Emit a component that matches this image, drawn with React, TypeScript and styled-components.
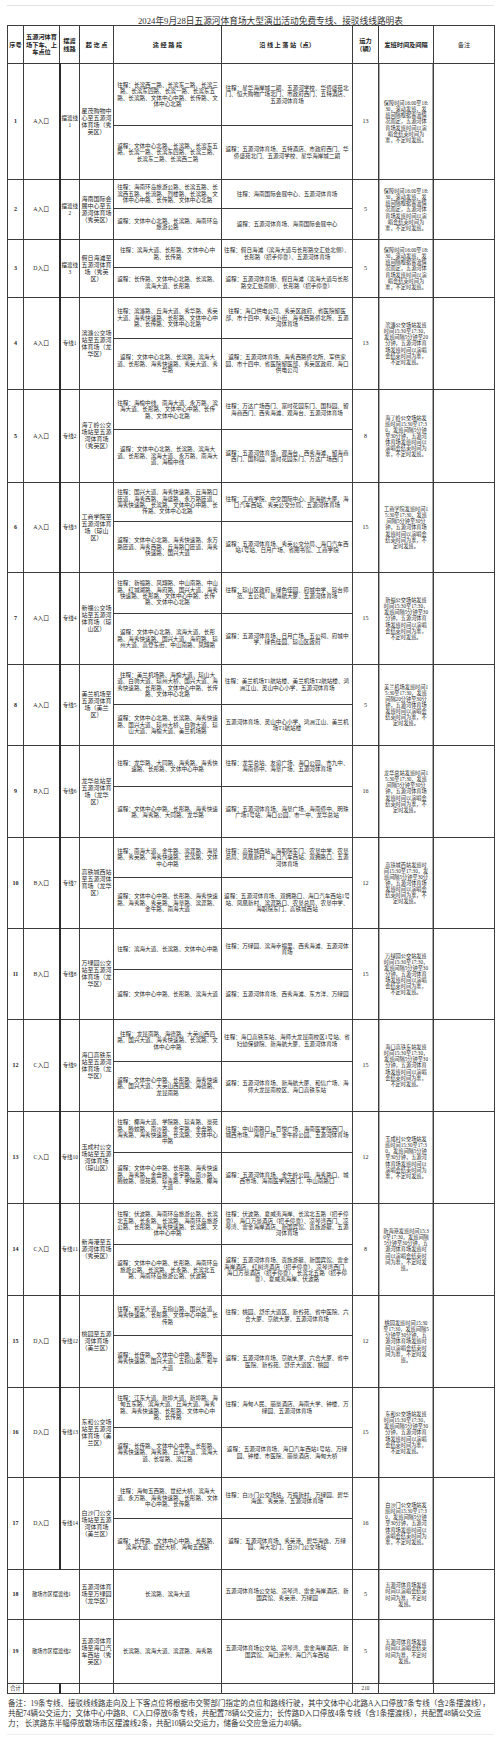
import React from "react";
import styled, { createGlobalStyle } from "styled-components";

const Global = createGlobalStyle`
  html, body { margin: 0; padding: 0; background: #ffffff; }
  body {
    width: 500px;
    font-family: "Liberation Serif", "Noto Sans CJK SC", serif;
    color: #262626;
  }
`;

const Page = styled.div`
  width: 500px;
  box-sizing: border-box;
  padding: 0 6px 6px 7px;
`;

const TitleBar = styled.div`
  height: 25px;
  box-sizing: border-box;
  border-top: 1px solid #e2e2e2;
  margin-top: 5px;
  margin-bottom: -5px;
  display: flex;
  align-items: flex-end;
  justify-content: center;
  padding: 0 0 4px 40px;
  font-size: 8.7px;
  line-height: 10px;
  color: #333;
  white-space: nowrap;
`;

const Table = styled.table`
  width: 487px;
  border-collapse: collapse;
  table-layout: fixed;
  font-size: 5.6px;
  line-height: 6.4px;
`;

const Row = styled.tr<{ $h: number }>`
  height: ${(p) => p.$h}px;
`;

const Cell = styled.td<{
  $bold?: boolean;
  $size?: number;
  $lh?: number;
  $thick?: boolean;
  $sched?: boolean;
}>`
  border: 1px solid #3c3c3c;
  ${(p) => (p.$thick ? "border-left: 2px solid #2a2a2a;" : "")}
  padding: ${(p) => (p.$sched ? "0 4px" : "0 1px")};
  text-align: center;
  vertical-align: middle;
  overflow: hidden;
  word-break: break-all;
  font-weight: ${(p) => (p.$bold ? 700 : 400)};
  font-size: ${(p) => (p.$size ? `${p.$size}px` : "inherit")};
  line-height: ${(p) => (p.$lh ? `${p.$lh}px` : "inherit")};
  ${(p) =>
    p.$sched ? "box-shadow: inset 1px 0 #a8a8a8, inset -1px 0 #a8a8a8;" : ""}
`;

const Head = styled.th<{ $light?: boolean }>`
  border: 1px solid #3c3c3c;
  padding: 0 1px;
  font-size: 6.2px;
  line-height: 7.4px;
  font-weight: ${(p) => (p.$light ? 400 : 700)};
  text-align: center;
  vertical-align: middle;
  word-break: break-all;
  color: #222;
`;

const Note = styled.div`
  font-size: 7.5px;
  line-height: 10px;
  padding: 5px 0 5px 1px;
  color: #333;
  word-break: break-all;
  border-bottom: 1px solid #eeeeee;
`;

type Route = {
  no: number;
  gate: string;
  line: string;
  od: string;
  go: string;
  back: string;
  goStops: string;
  backStops: string;
  cap: number;
  sched: string;
  h: [number, number];
};

type Shuttle = {
  no: number;
  name: string;
  od: string;
  route: string;
  stops: string;
  cap: number;
  sched: string;
  h: number;
};

const S1 =
  "保障时间16:00至18:30，滚动发班，发班间隔根据客流情况而定，五源河体育场发班时间以演唱会结束时间为准，不定时发班。";
const sched = (o: string, a = "5分钟至30分钟") =>
  `${o}发班时间15:30至17:30，发班间隔${a}，五源河体育场发班时间以演唱会结束时间为准，不定时发班。`;

const routes: Route[] = [
  {
    no: 1, gate: "A入口", line: "摆渡线1", od: "星茂购物中心至五源河体育场（秀英区）",
    go: "往程：长滨西二路、长滨东二路、长滨三路、长滨东四路、长滨一路、长滨东五路、长滨路、文体中心中路、长传路、文体中心北路",
    back: "返程：文体中心北路、长滨路、长滨东五路、长滨一路、长滨东四路、长滨三路、长滨东二路、长滨西二路",
    goStops: "往程：星华海岸城二期、五源河学校、华侨盛苑北门、恒大购物广场北门、市政府西门、五特酒店、五源河体育场",
    backStops: "返程：五源河体育场、五特酒店、市政府西门、华侨盛苑北门、五源河学校、星华海岸城二期",
    cap: 13, sched: S1, h: [62, 54],
  },
  {
    no: 2, gate: "A入口", line: "摆渡线2", od: "海南国际会展中心至五源河体育场（秀英区）",
    go: "往程：海南环岛旅游公路、长滨五路、长滨西五路、长流路、烈楼路、长滨路、文体中心中路、长传路、文体中心北路",
    back: "返程：文体中心北路、长滨路、海南环岛旅游公路",
    goStops: "往程：海南国际会展中心、五源河体育场",
    backStops: "返程：五源河体育场、海南国际会展中心",
    cap: 5, sched: S1, h: [29, 31],
  },
  {
    no: 3, gate: "D入口", line: "摆渡线3", od: "假日海滩至五源河体育场（秀英区）",
    go: "往程：滨海大道、长彤路、文体中心中路、长传路",
    back: "返程：长传路、文体中心北路、长滨路、滨海大道、长彤路",
    goStops: "往程：假日海滩（滨海大道与长彤路交汇处北侧）、长彤路（招手停靠）、五源河体育场",
    backStops: "返程：五源河体育场、假日海滩（滨海大道与长彤路交汇处南侧）、长彤路（招手停靠）",
    cap: 5, sched: S1, h: [28, 30],
  },
  {
    no: 4, gate: "A入口", line: "专线1", od: "滨濂公交场站至五源河体育场（龙华区）",
    go: "往程：滨濂路、丘海大道、秀华路、秀英大道、海秀快速路、长彤路、文体中心中路、长传路、文体中心北路",
    back: "返程：文体中心北路、长滨路、滨海大道、长彤路、海秀快速路、秀英大道、秀华路",
    goStops: "往程：海口供电公司、秀英区政府、省医院留医部、市十四中、秀英小街、海秀西路侨北所、五源河体育场",
    backStops: "返程：五源河体育场、海秀西路侨北所、军供家园、市十四中、省医院留医部、秀英区政府、海口供电公司",
    cap: 13, sched: sched("滨濂公交场站", "5分钟至20分钟"), h: [41, 51],
  },
  {
    no: 5, gate: "A入口", line: "专线2", od: "海了岭公交场站至五源河体育场（秀英区）",
    go: "往程：海榆中线、南海大道、永万路、滨海大道、长彤路、文体中心中路、长传路、文体中心北路",
    back: "返程：文体中心北路、长滨路、滨海大道、长彤路、滨海大道、永万路、南海大道、海榆中线",
    goStops: "往程：万达广场西门、富时花园东门、国科园、留海商西门、西秀海滩、观海台、五源河体育场",
    backStops: "返程：五源河体育场、观海台、西秀海滩、留海商西门、国科园、富时花园东门、万达广场西门",
    cap: 8, sched: sched("海了岭公交场站"), h: [40, 53],
  },
  {
    no: 6, gate: "A入口", line: "专线3", od: "工商学院至五源河体育场（琼山区）",
    go: "往程：国兴大道、海秀快速路、丘海路口匝道、海秀西路、海盛路、永万路匝道、海秀快速路、长滨路、文体中心中路、长传路、文体中心北路",
    back: "返程：文体中心北路、海秀快速路、永万路匝道、海秀西路、丘海路口匝道、海秀快速路、国兴大道",
    goStops: "往程：工商学院、中交国际中心、新海航大厦、海口汽车西站、秀英公交分局、五源河体育场",
    backStops: "返程：五源河体育场、秀英公交分局、海口汽车西站1号站、日月广场、省图书馆、工商学院",
    cap: 15, sched: sched("工商学院"), h: [39, 51],
  },
  {
    no: 7, gate: "A入口", line: "专线4", od: "新福公交场站至五源河体育场（琼山区）",
    go: "往程：新福路、凤翔路、中山南路、中山路、红城湖路、海府路、国兴大道、海秀快速路、长彤路、文体中心中路、长传路、文体中心北路",
    back: "返程：文体中心北路、滨海大道、长彤路、海秀快速路、国兴大道、海府路、琼州大道、高登东街、中山南路、凤翔路",
    goStops: "往程：琼山区政府、绿色佳园、府城中学、琼台师范、五公祠、新海航大厦、五源河体育场",
    backStops: "返程：五源河体育场、日月广场、五公祠、府城中学、绿色佳园、琼山区政府",
    cap: 15, sched: sched("新福公交场站"), h: [41, 51],
  },
  {
    no: 8, gate: "A入口", line: "专线5", od: "美兰机场至五源河体育场（美兰区）",
    go: "往程：美兰机场路、海榆大道、琼山大道、白驹大道、琼州大桥、国兴大道、海秀快速路、长彤路、文体中心中路、长传路、文体中心北路",
    back: "返程：文体中心北路、长滨路、海秀快速路、国兴大道、琼州大桥、白驹大道、琼山大道、海榆大道、美兰机场路",
    goStops: "往程：美兰机场T1航站楼、美兰机场T2航站楼、鸿洲江山、灵山中心小学、五源河体育场",
    backStops: "五源河体育场、灵山中心小学、鸿洲江山、美兰机场T1航站楼",
    cap: 5, sched: sched("美兰机场", "20分钟至30分钟"), h: [40, 41],
  },
  {
    no: 9, gate: "B入口", line: "专线6", od: "龙华总站至五源河体育场（龙华区）",
    go: "往程：龙华路、大同路、海秀路、海秀快速路、长彤路、文体中心中路",
    back: "返程：文体中心中路、长彤路、海秀快速路、海秀路、大同路、龙华路",
    goStops: "往程：龙华总站、友谊广场、海口公园、市九中、海南侨中、海垦广场、五源河体育场",
    backStops: "返程：五源河体育场、海垦广场、海南侨中、明珠广场1号站、海口公园、市一中、龙华总站",
    cap: 16, sched: sched("龙华总站"), h: [41, 51],
  },
  {
    no: 10, gate: "B入口", line: "专线7", od: "高铁城西站至五源河体育场（龙华区）",
    go: "往程：南海大道、金牛路、滨涯路、海垦路、秀英路、海秀快速路、长滨路、文体中心中路",
    back: "返程：文体中心中路、长彤路、海秀快速路、海秀路、秀英路、海垦路、滨涯路、金牛路、南海大道",
    goStops: "往程：高铁城西站、海职院东门、农垦中学、农垦总局、凤凰新村、海口汽车西站、双拥路口、五源河体育场",
    backStops: "返程：五源河体育场、双拥路口、海口汽车西站1号站、凤凰新村、滨涯路口、农垦总局、农垦中学、海职院东门、高铁城西站",
    cap: 12, sched: sched("高铁城西站"), h: [40, 51],
  },
  {
    no: 11, gate: "B入口", line: "专线8", od: "万绿园公交站至五源河体育场（龙华区）",
    go: "往程：滨海大道、长滨路、文体中心中路",
    back: "返程：文体中心中路、长彤路、滨海大道",
    goStops: "往程：万绿园、滨海幸福里、西秀海滩、五源河体育场",
    backStops: "返程：五源河体育场、西秀海滩、东方洋、万绿园",
    cap: 15, sched: sched("万绿园公交站"), h: [41, 50],
  },
  {
    no: 12, gate: "C入口", line: "专线9", od: "海口高铁东站至五源河体育场（龙华区）",
    go: "往程：龙昆南路、海德路、大英山西四路、国兴大道、海秀快速路、长滨路、文体中心中路",
    back: "返程：文体中心中路、长彤路、海秀快速路、国兴大道、大英山西四路、海德路、龙昆南路",
    goStops: "往程：海口高铁东站、海师大龙昆南校区1号站、省妇幼保健院、新海航大厦、五源河体育场",
    backStops: "返程：五源河体育场、新海航大厦、和信广场、海师大龙昆南校区、海口高铁东站",
    cap: 15, sched: sched("海口高铁东站"), h: [42, 50],
  },
  {
    no: 13, gate: "C入口", line: "专线10", od: "玉成村公交场站至五源河体育场（琼山区）",
    go: "往程：椰海大道、学院路、琼青路、豪苑路、腾蛟路、南沙路、金宇路、金盘路、海秀路、海秀快速路、长滨路、文体中心中路",
    back: "返程：文体中心中路、长彤路、海秀快速路、海秀路、金盘路、金宇路、南沙路、腾蛟路、豪苑路、琼青路、学院路、椰海大道",
    goStops: "往程：中山南路口、百悦广场、海南医学院西门、城西市场、海垦广场、金牛岭公园、五源河体育场",
    backStops: "返程：五源河体育场、金牛岭公园、海秀路口、城西市场、海南医学院西门、中山南路口",
    cap: 12, sched: sched("玉成村公交场站"), h: [41, 51],
  },
  {
    no: 14, gate: "C入口", line: "专线11", od: "新海港至五源河体育场（秀英区）",
    go: "往程：伏波路、海南环岛旅游公路、长滨北五路、长永路、长滨路、海南环岛旅游公路、长彤路、海秀快速路、长滨路、文体中心中路",
    back: "返程：文体中心中路、长彤路、海南环岛旅游公路、长滨路、长永路、长滨北五路、海南环岛旅游公路、伏波路",
    goStops: "往程：伏波路、夏威夷海岸、长滨北五路（招手停靠）、海口万豪酒店（招手停靠）、凉琴湾西门、凉琴湾、雷金海岸酒店、新国宾馆、贵族游艇、五源河体育场",
    backStops: "返程：五源河体育场、贵族游艇、新国宾馆、雷金海岸酒店、红树湾酒店（招手停靠）、凉琴湾西门、海口万豪酒店（招手停靠）、长滨北五路（招手停靠）、夏威夷海岸、伏波路",
    cap: 8, sched: sched("新海港"), h: [41, 51],
  },
  {
    no: 15, gate: "D入口", line: "专线12", od: "桃园至五源河体育场（美兰区）",
    go: "往程：和平大道、五指山路、国兴大道、海秀快速路、长彤路、文体中心中路、长传路",
    back: "返程：长传路、文体中心中路、长彤路、海秀快速路、国兴大道、五指山路、和平大道",
    goStops: "往程：桃园、舒乐大道区、新谷苑、省中医院、六合大厦、京航大厦、五源河体育场",
    backStops: "返程：五源河体育场、京航大厦、六合大厦、省中医院、新谷苑、舒乐大道区、桃园",
    cap: 12, sched: sched("桃园"), h: [40, 52],
  },
  {
    no: 16, gate: "D入口", line: "专线13", od: "东和公交场站至五源河体育场（美兰区）",
    go: "往程：江东大道、新埠大道、新埠路、海甸五东路、滨海大道、丘海大道、海秀路、海秀快速路、长彤路、文体中心中路、长传路",
    back: "返程：长传路、文体中心中路、长彤路、海秀快速路、海秀路、丘海大道、滨海大道、长堤路、滨江路",
    goStops: "往程：海甸人民、丽豪酒店、海南大学、钟楼、万绿园、五源河体育场",
    backStops: "返程：五源河体育场、海口汽车西站1号站、万绿园、钟楼、市医院、丽豪酒店、海甸大桥",
    cap: 15, sched: sched("东和公交场站"), h: [40, 50],
  },
  {
    no: 17, gate: "D入口", line: "专线14", od: "白沙门公交场站至五源河体育场（美兰区）",
    go: "往程：海甸五西路、世纪大桥、滨海大道、永万路、海秀快速路、长彤路、文体中心中路、长传路",
    back: "返程：长传路、文体中心中路、长彤路、滨海大道、世纪大桥、海甸五西路",
    goStops: "往程：白沙门公交场站、万福新村、万绿园、碧华海逸、秀英港、五源河体育场",
    backStops: "返程：五源河体育场、秀英港、碧华海逸、万绿园、海大北门、白沙门公交场站",
    cap: 16, sched: sched("白沙门公交场站"), h: [41, 51],
  },
];

const SHUTTLE_SCHED = "五源河体育场发班时间以演唱会结束时间为准，不定时发班。";

const shuttles: Shuttle[] = [
  {
    no: 18, name: "散场市区摆渡线1", od: "五源河体育场至万绿园（龙华区）",
    route: "长滨路、滨海大道",
    stops: "五源河体育场公交站、凉琴湾、雷金海岸酒店、新国宾馆、秀英港、万绿园",
    cap: 5, sched: SHUTTLE_SCHED, h: 50,
  },
  {
    no: 19, name: "散场市区摆渡线2", od: "五源河体育场至海口汽车西站（秀英区）",
    route: "长滨路、滨海大道、滨涯路、海秀路",
    stops: "五源河体育场公交站、凉琴湾、雷金海岸酒店、新国宾馆、海口港务、海口汽车西站",
    cap: 5, sched: SHUTTLE_SCHED, h: 64,
  },
];

const widths = [16, 36, 20, 34, 108, 131, 26, 55, 61];

const RouteRows: React.FC<{ r: Route }> = ({ r }) => (
  <>
    <Row $h={r.h[0]}>
      <Cell rowSpan={2} $bold $size={6}>{r.no}</Cell>
      <Cell rowSpan={2} $size={5.8}>{r.gate}</Cell>
      <Cell rowSpan={2} $thick $size={5.5}>{r.line}</Cell>
      <Cell rowSpan={2} $size={6} $lh={7}>{r.od}</Cell>
      <Cell>{r.go}</Cell>
      <Cell>{r.goStops}</Cell>
      <Cell rowSpan={2} $size={6}>{r.cap}</Cell>
      <Cell rowSpan={2} $sched $size={5.2} $lh={6.1}>{r.sched}</Cell>
      <Cell rowSpan={2} />
    </Row>
    <Row $h={r.h[1]}>
      <Cell>{r.back}</Cell>
      <Cell>{r.backStops}</Cell>
    </Row>
  </>
);

const ShuttleRow: React.FC<{ s: Shuttle }> = ({ s }) => (
  <Row $h={s.h}>
    <Cell $bold $size={6}>{s.no}</Cell>
    <Cell colSpan={2} $size={5.2}>{s.name}</Cell>
    <Cell $size={6} $lh={7}>{s.od}</Cell>
    <Cell>{s.route}</Cell>
    <Cell>{s.stops}</Cell>
    <Cell $size={6}>{s.cap}</Cell>
    <Cell $sched $size={5.2} $lh={6.1}>{s.sched}</Cell>
    <Cell />
  </Row>
);

export default function App() {
  const total = [...routes, ...shuttles].reduce((n, r) => n + r.cap, 0);
  return (
    <Page>
      <Global />
      <TitleBar>2024年9月28日五源河体育场大型演出活动免费专线、接驳线线路明表</TitleBar>
      <Table>
        <colgroup>
          {widths.map((w, i) => (
            <col key={i} style={{ width: w }} />
          ))}
        </colgroup>
        <tbody>
          <Row $h={38}>
            <Head>序号</Head>
            <Head>五源河体育场下车、上车点位</Head>
            <Head>摆渡线路</Head>
            <Head>起 讫 点</Head>
            <Head>途 经 路 段</Head>
            <Head>沿 线 上 落 站（点）</Head>
            <Head>运力（辆）</Head>
            <Head>发班时间及间隔</Head>
            <Head $light>备注</Head>
          </Row>
          {routes.map((r) => (
            <RouteRows key={r.no} r={r} />
          ))}
          {shuttles.map((s) => (
            <ShuttleRow key={s.no} s={s} />
          ))}
          <Row $h={10}>
            <Cell $size={5.2}>合计</Cell>
            <Cell />
            <Cell $thick />
            <Cell />
            <Cell />
            <Cell />
            <Cell $size={5.2}>{total}</Cell>
            <Cell />
            <Cell />
          </Row>
        </tbody>
      </Table>
      <Note>
        备注：19条专线、接驳线线路走向及上下客点位将根据市交警部门指定的点位和路线行驶，其中文体中心北路A入口停放7条专线（含2条摆渡线），共配74辆公交运力；文体中心中路B、C入口停放6条专线，共配置78辆公交运力；长传路D入口停放4条专线（含1条摆渡线），共配置48辆公交运力；&nbsp;长滨路东半幅停放散场市区摆渡线2条，共配10辆公交运力，储备公交应急运力40辆。
      </Note>
    </Page>
  );
}
